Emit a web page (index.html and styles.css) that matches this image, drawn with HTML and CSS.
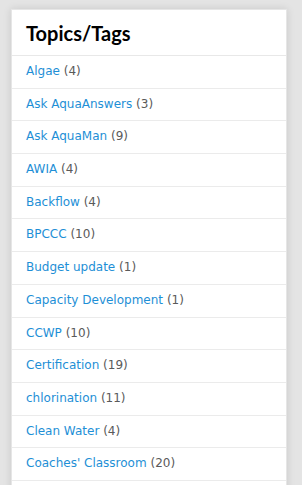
FILE: index.html
```html
<!DOCTYPE html>
<html>
<head>
<meta charset="utf-8">
<link rel="stylesheet" href="styles.css">
</head>
<body>
<div class="card">
  <h2 class="title">Topics/Tags</h2>
  <ul class="tags">
    <li><a href="#">Algae</a> <span class="count">(4)</span></li>
    <li><a href="#">Ask AquaAnswers</a> <span class="count">(3)</span></li>
    <li><a href="#">Ask AquaMan</a> <span class="count">(9)</span></li>
    <li><a href="#">AWIA</a> <span class="count">(4)</span></li>
    <li><a href="#">Backflow</a> <span class="count">(4)</span></li>
    <li><a href="#">BPCCC</a> <span class="count">(10)</span></li>
    <li><a href="#">Budget update</a> <span class="count">(1)</span></li>
    <li><a href="#">Capacity Development</a> <span class="count">(1)</span></li>
    <li><a href="#">CCWP</a> <span class="count">(10)</span></li>
    <li><a href="#">Certification</a> <span class="count">(19)</span></li>
    <li><a href="#">chlorination</a> <span class="count">(11)</span></li>
    <li><a href="#">Clean Water</a> <span class="count">(4)</span></li>
    <li><a href="#">Coaches' Classroom</a> <span class="count">(20)</span></li>
  </ul>
</div>
</body>
</html>
```
FILE: styles.css
```css
html, body {
  margin: 0;
  padding: 0;
  background: #e4e4e4;
  height: 100%;
  overflow: hidden;
}
body {
  padding: 9px 15px 0 11px;
  font-family: "DejaVu Sans", Verdana, sans-serif;
}
.card {
  background: #fff;
  width: 276px;
  box-shadow: 0 0 8px rgba(0,0,0,0.12);
  border: 1px solid #e6e6e6;
  box-sizing: border-box;
  padding-bottom: 40px;
}
.title {
  margin: 0;
  padding: 12px 14px 11px;
  font-family: Lato, "DejaVu Sans", sans-serif;
  font-size: 20px;
  font-weight: bold;
  color: #000;
  line-height: 22px;
  border-bottom: 1px solid #e8e8e8;
}
.tags {
  list-style: none;
  margin: 0;
  padding: 0;
}
.tags li {
  padding: 0 14px;
  height: 32.69px;
  line-height: 30px;
  font-size: 12px;
  border-bottom: 1px solid #ebebeb;
  box-sizing: border-box;
  white-space: nowrap;
}
.tags a {
  color: #1e8fd6;
  text-decoration: none;
}
.count {
  color: #5a5a5a;
}
```
